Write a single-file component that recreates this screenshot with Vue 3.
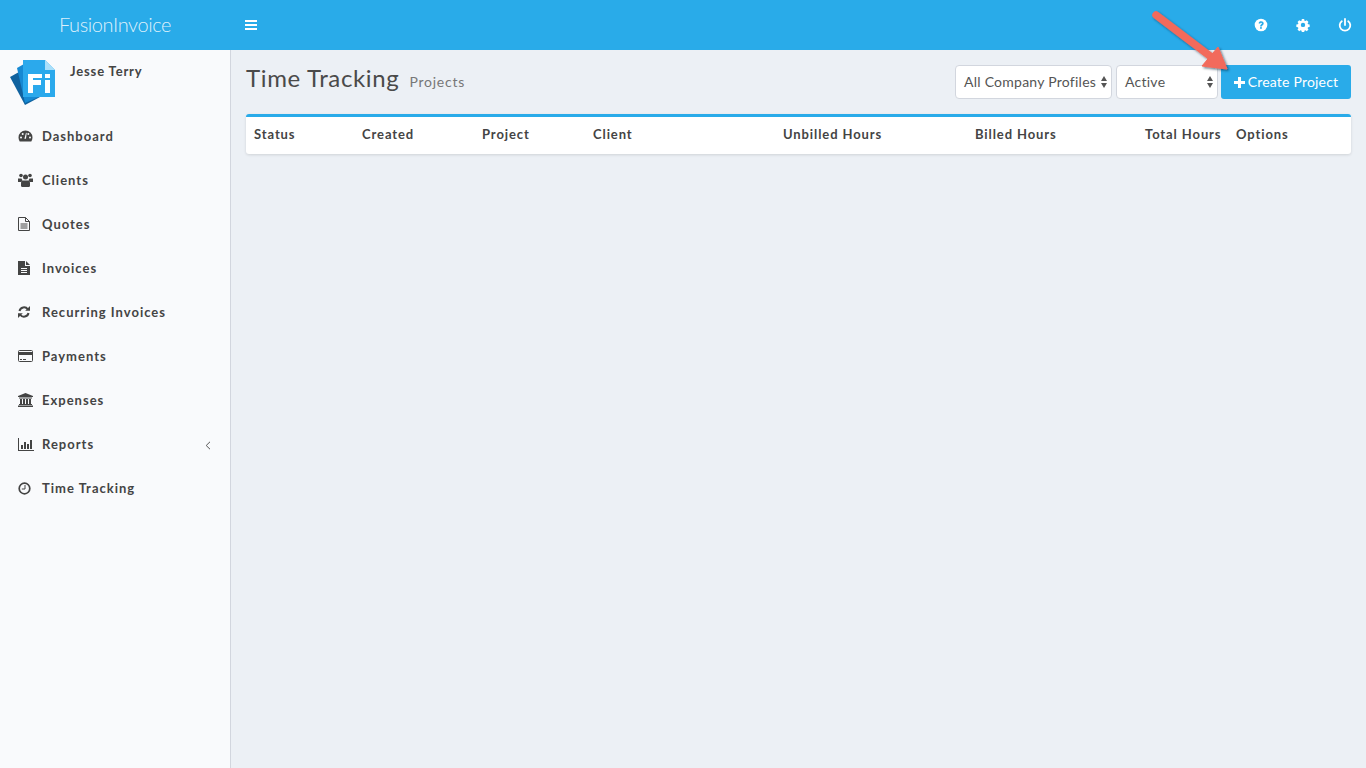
<script setup>
const nav = [
  { label: 'Dashboard', icon: 'gauge' },
  { label: 'Clients', icon: 'users' },
  { label: 'Quotes', icon: 'fileo' },
  { label: 'Invoices', icon: 'file' },
  { label: 'Recurring Invoices', icon: 'refresh' },
  { label: 'Payments', icon: 'card' },
  { label: 'Expenses', icon: 'bank' },
  { label: 'Reports', icon: 'chart', arrow: true },
  { label: 'Time Tracking', icon: 'clock' }
]
const columns = [
  { label: 'Status', width: 108 },
  { label: 'Created', width: 120 },
  { label: 'Project', width: 111 },
  { label: 'Client', width: 190 },
  { label: 'Unbilled Hours', width: 192 },
  { label: 'Billed Hours', width: 170 },
  { label: 'Total Hours', width: 91 },
  { label: 'Options', width: 100 }
]
</script>

<template>
  <div class="app">
    <header class="topbar">
      <div class="brand">FusionInvoice</div>
      <button class="toggle" aria-label="Toggle navigation">
        <svg width="12" height="10" viewBox="0 0 12 10"><path d="M0 0h12v2H0zM0 4h12v2H0zM0 8h12v2H0z" fill="#fff" /></svg>
      </button>
      <div class="top-icons">
        <svg width="14" height="14" viewBox="0 0 14 14">
          <circle cx="7" cy="7" r="6.300" fill="#fff" />
          <path d="M4.500 5.300C4.800 3.800 5.800 3.200 7.100 3.200c1.500 0 2.600.9 2.600 2.200 0 1.900-1.900 1.700-1.900 3.100H6.100c0-2.200 1.800-2 1.800-3 0-.4-.4-.7-.8-.7-.5 0-.8.300-1 .9z" fill="#29abe9" />
          <rect x="6.100" y="9.100" width="1.700" height="1.700" fill="#29abe9" />
        </svg>
        <svg width="14" height="14" viewBox="0 0 14 14">
          <path d="M5.700.5h2.600l.3 1.800 1.100.5 1.500-1 1.900 1.900-1 1.500.5 1.100 1.800.3v2.600l-1.800.3-.5 1.100 1 1.500-1.900 1.900-1.500-1-1.100.5-.3 1.800H5.700l-.3-1.800-1.100-.5-1.500 1L.9 12.100l1-1.500-.5-1.100L-.4 9.200V6.600l1.800-.3.5-1.100-1-1.500 1.900-1.900 1.500 1 1.100-.5z" fill="#fff" transform="translate(.7 .6) scale(.9)" />
          <circle cx="7" cy="6.900" r="2.200" fill="#29abe9" />
        </svg>
        <svg width="14" height="14" viewBox="0 0 14 14" fill="none" stroke="#fff" stroke-width="1.800" stroke-linecap="round">
          <path d="M7 1v6" />
          <path d="M3.800 3.200a5.300 5.300 0 1 0 6.400 0" />
        </svg>
      </div>
    </header>

    <div class="body">
      <aside class="sidebar">
        <div class="user">
          <svg class="logo" width="48" height="46" viewBox="0 0 48 46">
            <path d="M0 17 L9 12 L30 37 L15 45 Z" fill="#10629f" />
            <path d="M7 8 L14 4 V37 H29 L15 43 Z" fill="#1689d3" />
            <path d="M13 0 H35 L45 10 V37 H13 Z" fill="#2ba9ec" />
            <path d="M35 0 L45 10 H35 Z" fill="#a9dffb" />
            <path d="M18 14 H32 V18 H23 V20 H31 V25 H23 V33 H18 Z M35 14 H40 V18 H35 Z M35 20 H40 V33 H35 Z" fill="#fff" />
          </svg>
          <div class="user-name">Jesse Terry</div>
        </div>
        <nav class="menu">
          <a v-for="item in nav" :key="item.label" class="menu-item">
            <span class="menu-icon">
              <svg v-if="item.icon === 'gauge'" width="15" height="14" viewBox="0 0 15 14">
                <path d="M7.500 1.500A7 7 0 0 0 .5 8.500c0 1.500.4 2.800 1.200 4h11.600c.8-1.200 1.200-2.500 1.200-4a7 7 0 0 0-7-7z" fill="#444" />
                <circle cx="3" cy="8.500" r="1" fill="#f9fafc" /><circle cx="4.700" cy="5" r="1" fill="#f9fafc" /><circle cx="12" cy="8.500" r="1" fill="#f9fafc" /><circle cx="10.300" cy="5" r="1" fill="#f9fafc" />
                <path d="M6.400 9.700 8 3.800l.7.100-.7 5.900z" fill="#f9fafc" />
              </svg>
              <svg v-else-if="item.icon === 'users'" width="15" height="14" viewBox="0 0 15 14" fill="#444">
                <circle cx="3" cy="2.500" r="1.800" /><circle cx="12" cy="2.500" r="1.800" /><circle cx="7.500" cy="4" r="2.500" />
                <path d="M0 5.500h3.500l.8 1.500-1 2H0zM15 5.500h-3.500L10.700 7l1 2H15z" />
                <path d="M3.500 7.500h8l.5 2.500v3.300l-1 .7H4l-1-.7V10z" />
              </svg>
              <svg v-else-if="item.icon === 'fileo'" width="12" height="14" viewBox="0 0 12 14" fill="none" stroke="#444">
                <path d="M.5.500h7l4 4v9H.5z" /><path d="M7.500.500v4h4M2.500 7h7M2.500 9h7M2.500 11h7" />
              </svg>
              <svg v-else-if="item.icon === 'file'" width="12" height="14" viewBox="0 0 12 14">
                <path d="M0 0h7v5h5v9H0z" fill="#444" /><path d="M8 0l4 4H8z" fill="#444" />
                <path d="M3 7h6v1H3zM3 9h6v1H3zM3 11h6v1H3z" fill="#f9fafc" />
              </svg>
              <svg v-else-if="item.icon === 'refresh'" width="12" height="12" viewBox="0 0 12 12" fill="none" stroke="#444" stroke-width="2">
                <path d="M1.500 5A4.600 4.600 0 0 1 9.800 3.300" /><path d="M10.500 7A4.600 4.600 0 0 1 2.200 8.700" />
                <path d="M12 0v4.800H7.200z" fill="#444" stroke="none" /><path d="M0 12V7.200h4.800z" fill="#444" stroke="none" />
              </svg>
              <svg v-else-if="item.icon === 'card'" width="15" height="12" viewBox="0 0 15 12">
                <rect x=".5" y=".5" width="14" height="11" rx="1" fill="none" stroke="#444" />
                <rect x="1" y="2" width="13" height="3" fill="#444" />
                <path d="M2 9h2v1H2zM5 9h3v1H5z" fill="#444" />
              </svg>
              <svg v-else-if="item.icon === 'bank'" width="15" height="14" viewBox="0 0 15 14" fill="#444">
                <path d="M7.500 0 15 3v1H0V3z" /><rect x="1" y="4.500" width="13" height="1" />
                <path d="M2 6h2v5H2zM5 6h2v5H5zM8 6h2v5H8zM11 6h2v5h-2z" /><rect x="1" y="11" width="13" height="1" /><rect y="12.500" width="15" height="1.500" />
              </svg>
              <svg v-else-if="item.icon === 'chart'" width="16" height="13" viewBox="0 0 16 13" fill="#444">
                <path d="M0 0h1v12h15v1H0z" /><path d="M3 7h2v4H3zM6 4h2v7H6zM9 6h2v5H9zM12 2h2v9h-2z" />
              </svg>
              <svg v-else width="13" height="13" viewBox="0 0 13 13" fill="none" stroke="#444">
                <circle cx="6.500" cy="6.500" r="5.300" stroke-width="1.700" /><path d="M7 3v4H3.800" />
              </svg>
            </span>
            <span class="menu-label">{{ item.label }}</span>
            <svg v-if="item.arrow" class="menu-arrow" width="6" height="9" viewBox="0 0 6 9" fill="none" stroke="#555"><path d="M5 .8 1.200 4.500 5 8.200" /></svg>
          </a>
        </nav>
      </aside>

      <main class="content">
        <div class="page-head">
          <h1 class="title">Time Tracking<small>Projects</small></h1>
          <div class="actions">
            <div class="select select-profile">All Company Profiles<span class="carets" /></div>
            <div class="select select-status">Active<span class="carets" /></div>
            <button class="create">
              <svg class="plus" width="11" height="11" viewBox="0 0 11 11"><path d="M4 0h3v4h4v3H7v4H4V7H0V4h4z" fill="#fff" /></svg>
              Create Project
            </button>
          </div>
        </div>
        <div class="box">
          <div class="row">
            <div v-for="col in columns" :key="col.label" class="cell" :style="{ width: col.width + 'px' }">{{ col.label }}</div>
          </div>
        </div>
      </main>
    </div>

    <svg class="pointer" width="100" height="70" viewBox="0 0 100 70">
      <defs>
        <filter id="arrow-shadow" x="-20%" y="-20%" width="140%" height="140%">
          <feDropShadow dx="1.500" dy="1.500" stdDeviation="1.200" flood-color="#03263a" flood-opacity=".6" />
        </filter>
      </defs>
      <g filter="url(#arrow-shadow)">
        <path d="M6 7 L60 48" stroke="#f26a5b" stroke-width="7.500" stroke-linecap="round" />
        <path d="M68 39 L77 61 L52 58 Z" fill="#f26a5b" stroke="#f26a5b" stroke-width="1" stroke-linejoin="round" />
      </g>
    </svg>
  </div>
</template>

<style scoped>
.app {
  position: relative;
  width: 1366px;
  height: 768px;
  overflow: hidden;
  background: #ecf0f5;
  font-family: Lato, "Open Sans", sans-serif;
  color: #444;
}
.topbar {
  display: flex;
  align-items: center;
  height: 50px;
  background: #29abe9;
}
.brand {
  width: 230px;
  padding: 0 0 2px 59px;
  box-sizing: border-box;
  font-family: Lato, sans-serif;
  font-weight: 300;
  font-size: 20px;
  letter-spacing: -0.4px;
  color: rgba(255, 255, 255, 0.85);
}
.toggle {
  display: flex;
  margin-left: 15px;
  padding: 0;
  border: 0;
  background: none;
}
.top-icons {
  display: flex;
  gap: 28px;
  margin-left: auto;
  padding-right: 14px;
}
.body {
  display: flex;
  height: 718px;
}
.sidebar {
  flex: none;
  width: 230px;
  background: #f9fafc;
  border-right: 1px solid #d2d6de;
}
.user {
  display: flex;
  height: 64px;
  padding: 10px 0 0 10px;
  box-sizing: border-box;
}
.logo {
  flex: none;
}
.user-name {
  margin: 3px 0 0 12px;
  font-size: 13px;
  font-weight: 700;
  letter-spacing: 0.85px;
}
.menu {
  display: flex;
  flex-direction: column;
}
.menu-item {
  display: flex;
  align-items: center;
  height: 44px;
  padding: 0 18px;
  font-size: 13px;
  font-weight: 700;
  letter-spacing: 1px;
}
.menu-icon {
  display: flex;
  align-items: center;
  width: 24px;
}
.menu-arrow {
  margin-left: auto;
  margin-top: 2px;
  margin-right: 1px;
}
.content {
  flex: 1;
  padding: 0 15px;
}
.page-head {
  display: flex;
  align-items: center;
  justify-content: space-between;
  height: 64px;
}
.title {
  margin: 0 0 9px;
  font-size: 24px;
  font-weight: 400;
  letter-spacing: 0.65px;
  color: #4a4a4a;
}
.title small {
  margin-left: 10px;
  font-size: 14px;
  letter-spacing: 0.75px;
  color: #777;
}
.actions {
  display: flex;
  gap: 4px;
}
.select {
  position: relative;
  height: 34px;
  line-height: 31px;
  box-sizing: border-box;
  padding-left: 8px;
  background: #fff;
  border: 1px solid #d2d6de;
  border-radius: 4px;
  font-size: 14px;
  letter-spacing: 0.25px;
  color: #555;
}
.select-profile {
  width: 157px;
}
.select-status {
  width: 102px;
}
.carets {
  position: absolute;
  right: 4px;
  top: 10px;
  width: 0;
  height: 0;
  border: 3.5px solid transparent;
  border-bottom: 5px solid #555;
  border-top: 0;
}
.carets::after {
  content: "";
  position: absolute;
  left: -3.500px;
  top: 7px;
  border: 3.500px solid transparent;
  border-top: 5px solid #555;
  border-bottom: 0;
}
.create {
  display: flex;
  align-items: center;
  justify-content: center;
  width: 130px;
  height: 34px;
  margin-left: -1px;
  padding: 0 0 2px;
  border: 0;
  border-radius: 3px;
  background: #29abe9;
  font-family: inherit;
  font-size: 14px;
  letter-spacing: 0.2px;
  color: #fff;
}
.plus {
  margin: 2px 3px 0 0;
}
.box {
  background: #fff;
  border-top: 3px solid #29abe9;
  border-radius: 3px;
  box-shadow: 0 1px 3px rgba(0, 0, 0, 0.12);
}
.row {
  display: flex;
  height: 33px;
  align-items: center;
  padding: 0 0 4px 8px;
}
.cell {
  flex: none;
  font-size: 13px;
  font-weight: 700;
  letter-spacing: 0.9px;
}
.pointer {
  position: absolute;
  left: 1150px;
  top: 8px;
}
</style>
